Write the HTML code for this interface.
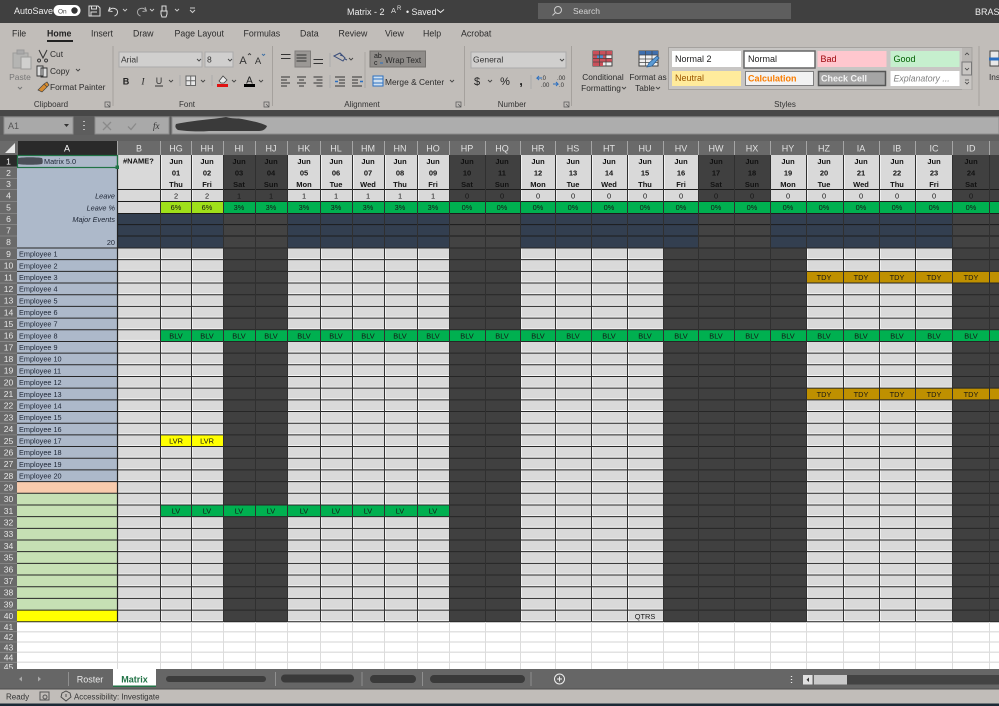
<!DOCTYPE html>
<html><head><meta charset="utf-8"><title>Matrix</title>
<style>
html,body{margin:0;padding:0;background:#404040;width:999px;height:706px;overflow:hidden}
svg{display:block;font-family:"Liberation Sans",sans-serif;filter:blur(.3px)}
.t{font-size:8.4px;fill:#2b2b2b}
.c{text-anchor:middle}
.hd{font-size:9px;fill:#e2e2e2;text-anchor:middle}
.rn{font-size:8.6px;fill:#e6e6e6;text-anchor:middle}
.d{font-size:7.5px;font-weight:bold;fill:#111;text-anchor:middle}
.v{font-size:7.4px;fill:#151515;text-anchor:middle}
.e{font-size:7.3px;fill:#1c2433}
.ch{fill:none;stroke:#444;stroke-width:.9}
</style></head><body>
<svg width="999" height="706" viewBox="0 0 999 706" xmlns="http://www.w3.org/2000/svg">
<!-- title bar -->
<rect width="999" height="23" fill="#404040"/>
<text x="14" y="14" font-size="9" fill="#eee">AutoSave</text>
<rect x="53.500" y="5" width="27" height="11" rx="5.500" fill="#fff"/>
<text x="58" y="13.500" font-size="6.500" fill="#444">On</text>
<circle cx="74.500" cy="10.500" r="3.200" fill="#333"/>
<path d="M89 6h9l2 2v8H89zM91.500 6v3h5V6M91 16v-4h6" fill="none" stroke="#ddd" stroke-width="1"/>
<path d="M110 7l-1.500 4 4 .5M109 10.500c3-4 9-2 8.500 2 -.2 2-1.500 3-3 3.500" fill="none" stroke="#ddd" stroke-width="1"/>
<path d="M123 9l2 2 2-2" class="ch" style="stroke:#ccc"/>
<path d="M145 7l1.500 4-4 .5M146 10.500c-3-4-9-2-8.500 2 .2 2 1.500 3 3 3.500" fill="none" stroke="#aaa" stroke-width="1"/>
<path d="M150 9l2 2 2-2" class="ch" style="stroke:#ccc"/>
<path d="M162 6h4v5h-4zM161 11h6v3l-1 3h-4l-1-3z" fill="none" stroke="#ddd" stroke-width="1"/>
<path d="M175 9l2 2 2-2" class="ch" style="stroke:#ccc"/>
<path d="M190 8h5M190 10l2.500 2.500L195 10" fill="none" stroke="#ccc" stroke-width="1"/>
<text x="347" y="15" font-size="9" fill="#eee">Matrix  -  2</text>
<text x="391" y="13" font-size="7.500" fill="#ddd">A</text><text x="397" y="10" font-size="6" fill="#ddd">R</text>
<text x="406" y="15" font-size="8.800" fill="#eee">• Saved</text>
<path d="M437 9.500l3.500 3 3.500-3" fill="none" stroke="#eee" stroke-width="1"/>
<rect x="538" y="3" width="253" height="16" fill="#5e5e5e"/>
<circle cx="558" cy="10" r="3.500" fill="none" stroke="#ccc"/><path d="M555.500 12.500l-3 3" stroke="#ccc"/>
<text x="573" y="14" font-size="8.500" fill="#d5d5d5">Search</text>
<text x="975" y="15" font-size="9" fill="#eee">BRASH</text>

<!-- ribbon -->
<rect y="23" width="999" height="87" fill="#c1bdb9"/>
<g class="t" style="font-size:8.800px">
<text x="12" y="36.500">File</text>
<text x="47" y="36.500" font-weight="bold" fill="#222">Home</text>
<text x="91" y="36.500">Insert</text>
<text x="133" y="36.500">Draw</text>
<text x="174.500" y="36.500">Page Layout</text>
<text x="243.500" y="36.500">Formulas</text>
<text x="300" y="36.500">Data</text>
<text x="338.500" y="36.500">Review</text>
<text x="385" y="36.500">View</text>
<text x="423" y="36.500">Help</text>
<text x="461" y="36.500">Acrobat</text>
</g>
<rect x="47" y="40" width="26" height="2" fill="#222"/>
<path d="M113 46v60M272.500 46v60M464.500 46v60M571.500 46v60M979 46v60" stroke="#a5a19d" stroke-width="1"/>

<!-- clipboard -->
<path d="M13 53h15v15H13z" fill="#b5b5b3" stroke="#9d9d9b"/>
<rect x="17" y="50" width="7" height="4" fill="#aaa" stroke="#999"/>
<rect x="21" y="57" width="10" height="12" fill="#d0d0ce" stroke="#9d9d9b"/>
<text x="20" y="80" font-size="8.500" fill="#777" class="c">Paste</text>
<path d="M18 87l2 2 2-2" fill="none" stroke="#777"/>
<path d="M39 50l4 8 4-8M39 59a1.500 1.500 0 1 0 .1 0M46 59a1.500 1.500 0 1 0 .1 0" fill="none" stroke="#333" stroke-width="1"/>
<text x="50" y="57" class="t">Cut</text>
<path d="M37 66h6l0 10h-6zM41 68h6v9h-6z" fill="#ddd" stroke="#333" stroke-width=".9"/>
<text x="50" y="74" class="t">Copy</text>
<path d="M76 69l2 2 2-2" class="ch"/>
<path d="M38 90l6-6 3 3-5 5zM44 84l3-2 2 3-2 2" fill="#d88b2e" stroke="#444" stroke-width=".7"/>
<text x="50" y="90" class="t">Format Painter</text>
<text x="51" y="107" font-size="8" fill="#333" class="c">Clipboard</text>
<path d="M105 102h5v5h-5zM107 104l3 3" fill="none" stroke="#555" stroke-width=".7"/>

<!-- font group -->
<rect x="119" y="52" width="83" height="15" fill="#d0cfce" stroke="#aaa"/>
<text x="121" y="62.500" font-size="8.500" fill="#333">Arial</text>
<path d="M197 59l2 2 2-2" class="ch"/>
<rect x="205" y="52" width="28" height="15" fill="#d0cfce" stroke="#aaa"/>
<text x="207" y="62.500" font-size="8.500" fill="#333">8</text>
<path d="M228 59l2 2 2-2" class="ch"/>
<text x="243" y="64" font-size="11" fill="#333" class="c">A</text><path d="M248 55l1.500-1.500 1.500 1.500" class="ch"/>
<text x="258" y="64" font-size="9.500" fill="#333" class="c">A</text><path d="M262 54l1.500 1.500 1.500-1.500" class="ch" style="stroke:#3a6ea5"/>
<text x="126" y="84.500" font-size="9" font-weight="bold" fill="#222" class="c">B</text>
<text x="143" y="84.500" font-size="9" font-style="italic" fill="#222" class="c" font-family="Liberation Serif">I</text>
<text x="159" y="84" font-size="9" fill="#333" class="c">U</text><path d="M155 86h8" stroke="#333"/>
<path d="M169 80l2 2 2-2" class="ch"/>
<rect x="186" y="76" width="9.500" height="9.500" fill="#e8e8e8" stroke="#666"/><path d="M190.700 76v9.500M186 80.700h9.500" stroke="#666"/>
<path d="M201 80l2 2 2-2" class="ch"/>
<path d="M180 75v11M212 75v11" stroke="#aaa"/>
<path d="M219 81l4-5 4 4-3 3h-3z" fill="#e8e8e8" stroke="#444" stroke-width=".8"/>
<rect x="217" y="84" width="11" height="3" fill="#e01212"/>
<path d="M232 80l2 2 2-2" class="ch"/>
<text x="249.500" y="83.500" font-size="10" fill="#222" class="c">A</text>
<rect x="244" y="84" width="11" height="3" fill="#000"/>
<path d="M259 80l2 2 2-2" class="ch"/>
<text x="187" y="107" font-size="8" fill="#333" class="c">Font</text>
<path d="M264 102h5v5h-5zM266 104l3 3" fill="none" stroke="#555" stroke-width=".7"/>

<!-- alignment -->
<rect x="295" y="51" width="15.500" height="16" fill="#9b9895" stroke="#807d7a"/>
<path d="M281 54.500h9.500M281 58.500h9.500M296.500 55h10M296.500 58h10M296.500 61h10M313.500 59.500h9.500M313.500 63.500h9.500" stroke="#333" stroke-width="1"/>
<path d="M334 56l6-3 5 5-2 3zM340 55l3 1M345 59l2 1" fill="none" stroke="#3a4d7a" stroke-width="1"/>
<path d="M349 58l2 2 2-2" class="ch"/>
<path d="M330 53v14M330 75v13" stroke="#aaa"/>
<path d="M281 77h9M281 80h6M281 83h9M281 86h6M297 77h9M299 80h5M297 83h9M299 86h5M313.500 77h9M316.500 80h6M313.500 83h9M316.500 86h6M335 77h10M335 86h10M339 80h6M339 83h6M352 77h10M352 86h10M352 80h6M352 83h6" stroke="#333" stroke-width="1"/>
<path d="M338 81.500l-3 0M360 81.500l3 0" stroke="#2b6fc0" stroke-width="1.500"/>
<path d="M365 52v36" stroke="#a9a5a1"/>
<rect x="370" y="51" width="55.500" height="16" fill="#8f8c89" stroke="#75726f"/>
<text x="374" y="58" font-size="7" fill="#222">ab</text><text x="374" y="65" font-size="7" fill="#222">c</text>
<path d="M380 63h3" stroke="#2b6fc0"/>
<text x="385" y="63" class="t" style="font-size:8.100px">Wrap Text</text>
<rect x="373" y="76" width="10" height="10" fill="#cfe0f0" stroke="#2b6fc0" stroke-width="1"/><path d="M373 79h10M373 83h10" stroke="#2b6fc0"/>
<text x="385" y="85" class="t">Merge &amp; Center</text>
<path d="M450 80l2 2 2-2" class="ch"/>
<text x="362" y="107" font-size="8" fill="#333" class="c">Alignment</text>
<path d="M456 102h5v5h-5zM458 104l3 3" fill="none" stroke="#555" stroke-width=".7"/>

<!-- number -->
<rect x="471" y="52" width="95" height="16" fill="#d0cfce" stroke="#aaa"/>
<text x="473" y="62.500" font-size="8.500" fill="#333">General</text>
<path d="M560 59l2 2 2-2" class="ch"/>
<text x="477" y="85" font-size="11" fill="#222" class="c">$</text>
<path d="M488 80l2 2 2-2" class="ch"/>
<text x="505" y="85" font-size="11" fill="#222" class="c">%</text>
<text x="521" y="85" font-size="13" font-weight="bold" fill="#222" class="c">,</text>
<path d="M531 75v14" stroke="#aaa"/>
<text x="541" y="80" font-size="6" fill="#333">.0</text><text x="541" y="87" font-size="6" fill="#333">.00</text>
<path d="M542 78h-5l2-2M537 78l2 2" fill="none" stroke="#2b6fc0"/>
<text x="557" y="80" font-size="6" fill="#333">.00</text><text x="559" y="87" font-size="6" fill="#333">.0</text>
<path d="M553 84h5l-2-2M558 84l-2 2" fill="none" stroke="#2b6fc0"/>
<text x="512" y="107" font-size="8" fill="#333" class="c">Number</text>
<path d="M564 102h5v5h-5zM566 104l3 3" fill="none" stroke="#555" stroke-width=".7"/>

<!-- cond format -->
<rect x="593" y="51" width="19" height="15" fill="#eee" stroke="#444"/>
<path d="M593 51h19v4h-6v3h6v4h-9v4h-10z" fill="#c9505a"/>
<path d="M597 55h6v3h-6z" fill="#4f8fd0"/>
<path d="M599.500 51v15M606 51v15M593 55h19M593 58.500h19M593 62h19" stroke="#444" stroke-width=".7"/>
<text x="603" y="80" class="c" font-size="8.300" fill="#2b2b2b">Conditional</text>
<text x="601" y="91" class="c" font-size="8.300" fill="#2b2b2b">Formatting</text>
<path d="M622 87l2 2 2-2" class="ch"/>
<rect x="639" y="51" width="19" height="15" fill="#f0f0f0" stroke="#444"/>
<rect x="639" y="51" width="19" height="4" fill="#3f6fae"/>
<path d="M645.500 51v15M652 51v15M639 55h19M639 59h19M639 62.500h19" stroke="#444" stroke-width=".7"/>
<path d="M647 67l2-4 8-7 2 2-7 8z" fill="#5b9bd5" stroke="#2b5f95" stroke-width=".8"/>
<text x="648" y="80" class="c" font-size="8.300" fill="#2b2b2b">Format as</text>
<text x="645" y="91" class="c" font-size="8.300" fill="#2b2b2b">Table</text>
<path d="M656 87l2 2 2-2" class="ch"/>

<!-- styles -->
<rect x="668.500" y="47.500" width="303.500" height="42" fill="#c8c6c4" stroke="#a5a29f"/>
<rect x="672" y="51" width="69" height="16" fill="#fff"/>
<text x="675" y="62" font-size="9" fill="#222">Normal 2</text>
<rect x="744" y="51" width="71" height="17" fill="#fff" stroke="#666" stroke-width="1.500"/>
<text x="748" y="62" font-size="9" fill="#222">Normal</text>
<rect x="817.500" y="51" width="69" height="16" fill="#ffc7ce"/>
<text x="820.500" y="62" font-size="9" fill="#9c0006">Bad</text>
<rect x="890.500" y="51" width="69" height="16" fill="#c6efce"/>
<text x="893.500" y="62" font-size="9" fill="#006100">Good</text>
<rect x="672" y="71" width="69" height="15" fill="#ffeb9c"/>
<text x="675" y="81" font-size="9" fill="#9c5700">Neutral</text>
<rect x="745.500" y="71.500" width="68" height="14" fill="#f2f2f2" stroke="#7f7f7f"/>
<text x="748" y="81.500" font-size="9" font-weight="bold" fill="#fa7d00">Calculation</text>
<rect x="818.500" y="71.500" width="67" height="14" fill="#a5a5a5" stroke="#555" stroke-width="1.500"/>
<text x="821" y="81.500" font-size="9" font-weight="bold" fill="#f4f4f4">Check Cell</text>
<rect x="890.500" y="71" width="69" height="15" fill="#fff"/>
<text x="893.500" y="81.500" font-size="8.800" font-style="italic" fill="#7f7f7f">Explanatory ...</text>
<rect x="962" y="48" width="9.500" height="14" fill="#b9b6b3"/><rect x="962" y="62" width="9.500" height="13" fill="#c9c6c3" stroke="#777"/><rect x="962" y="75.500" width="9.500" height="14" fill="#c9c6c3"/>
<path d="M965 55l2-2 2 2M965 68l2 2 2-2M965 80h4M965 82l2 2 2-2" fill="none" stroke="#444" stroke-width=".8"/>
<text x="785" y="107" font-size="8" fill="#333" class="c">Styles</text>
<rect x="990" y="51" width="9" height="15" fill="#e8e8e8" stroke="#444"/><path d="M989 59h10" stroke="#2b6fc0" stroke-width="3"/>
<text x="989" y="80" font-size="8.300" fill="#2b2b2b">Ins</text>

<!-- formula bar -->
<rect y="110" width="999" height="6" fill="#474747"/>
<rect y="116" width="999" height="25" fill="#5d5d5d"/>
<rect x="4" y="117" width="69" height="17" fill="#a9a9a9" stroke="#8d8d8d"/>
<text x="8" y="129" font-size="9" fill="#555">A1</text>
<path d="M64 124h5l-2.500 3z" fill="#333"/>
<path d="M84 121v1M84 125v1M84 129v1" stroke="#ddd" stroke-width="1.500"/>
<rect x="95" y="117" width="74" height="17" fill="#a9a9a9" stroke="#8d8d8d"/>
<path d="M103 122l8 8M111 122l-8 8M128 126.500l3 3 5-6" fill="none" stroke="#8a8a8a" stroke-width="1.300"/>
<text x="153" y="129" font-size="9" font-style="italic" font-family="Liberation Serif" fill="#333">fx</text>
<rect x="172" y="117" width="827" height="17" fill="#adadad" stroke="#8d8d8d"/>
<path d="M176 124c20-4 40-5 50-7 6 2 12 1 16 2 10 2 20 4 25 7 -1 3-4 5-8 5h-50c-12 1-24 0-31-1 -3-2-3-4-2-6z" fill="#3a3a3a"/>

<!-- column header band -->
<rect y="135" width="999" height="20" fill="#606060"/>
<rect y="141" width="999" height="14" fill="#6a6a6a"/>
<path d="M15 143v10H5z" fill="#e8e8e8"/>
<rect x="18" y="141" width="99" height="14" fill="#2a2a2a"/>
<path d="M117.500 141v14M160.500 141v14M191.500 141v14M223.500 141v14M255.500 141v14M287.500 141v14M320.500 141v14M352.500 141v14M384.500 141v14M417.500 141v14M449.500 141v14M485.500 141v14M520.500 141v14M555.500 141v14M591.500 141v14M627.500 141v14M663.500 141v14M698.500 141v14M734.500 141v14M770.500 141v14M806.500 141v14M843.500 141v14M879.500 141v14M915.500 141v14M952.500 141v14M989.500 141v14" stroke="#a5a5a5" stroke-width="1"/>
<text x="67" y="151.500" class="hd" style="fill:#fff">A</text>
<g class="hd">
<text x="139" y="151.500">B</text><text x="176" y="151.500">HG</text><text x="207" y="151.500">HH</text><text x="239" y="151.500">HI</text><text x="271" y="151.500">HJ</text><text x="304" y="151.500">HK</text><text x="336" y="151.500">HL</text><text x="368" y="151.500">HM</text><text x="400" y="151.500">HN</text><text x="433" y="151.500">HO</text><text x="467" y="151.500">HP</text><text x="502" y="151.500">HQ</text><text x="538" y="151.500">HR</text><text x="573" y="151.500">HS</text><text x="609" y="151.500">HT</text><text x="645" y="151.500">HU</text><text x="681" y="151.500">HV</text><text x="716" y="151.500">HW</text><text x="752" y="151.500">HX</text><text x="788" y="151.500">HY</text><text x="824" y="151.500">HZ</text><text x="861" y="151.500">IA</text><text x="897" y="151.500">IB</text><text x="934" y="151.500">IC</text><text x="971" y="151.500">ID</text>
</g>

<!-- row header column -->
<rect x="0" y="155" width="17" height="514" fill="#6a6a6a"/>
<rect x="0" y="155" width="17" height="12" fill="#2a2a2a"/>

<!-- sheet -->
<rect x="17" y="155" width="982" height="514" fill="#fff"/>
<!-- column A -->
<rect x="17" y="155" width="100" height="326.600" fill="#adb9ca"/>
<rect x="17" y="481.600" width="100" height="11.680" fill="#f8cbad"/>
<rect x="17" y="493.280" width="100" height="116.800" fill="#c6e0b4"/>
<rect x="17" y="610.080" width="100" height="11.680" fill="#ffff00"/>
<!-- light base -->
<rect x="117" y="155" width="882" height="58" fill="#d9d9d9"/>
<rect x="117" y="248" width="882" height="373.760" fill="#d9d9d9"/>
<!-- light row highlights rows 9-40 -->
<path d="M117 258.700H999M117 270.400H999M117 282H999M117 293.700H999M117 305.400H999M117 317.100H999M117 328.800H999M117 340.400H999M117 352.100H999M117 363.800H999M117 375.500H999M117 387.200H999M117 398.800H999M117 410.500H999M117 422.200H999M117 433.900H999M117 445.600H999M117 457.200H999M117 468.900H999M117 480.600H999M117 492.300H999M117 504H999M117 515.600H999M117 527.300H999M117 539H999M117 550.700H999M117 562.400H999M117 574H999M117 585.700H999M117 597.400H999M117 609.100H999M117 620.800H999" stroke="#f4f4f4" stroke-width="1"/>
<!-- vertical light sides -->
<path d="M161.500 155V622M192.500 155V622M321.500 155V622M353.500 155V622M385.500 155V622M418.500 155V622M521.500 155V622M556.500 155V622M592.500 155V622M628.500 155V622M664.500 155V248M807.500 155V622M844.500 155V622M880.500 155V622M916.500 155V622" stroke="#f0f0f0" stroke-width="1"/>
<!-- dark areas rows 1-5 -->
<rect x="223" y="155" width="64.500" height="46" fill="#404040"/>
<rect x="449" y="155" width="71" height="46" fill="#404040"/>
<rect x="699" y="155" width="71" height="46" fill="#404040"/>
<rect x="952.500" y="155" width="46.500" height="46" fill="#404040"/>
<!-- row 5 -->
<rect x="160" y="201" width="63" height="12" fill="#9fe01a"/>
<rect x="223" y="201" width="776" height="12" fill="#00b050"/>
<!-- row 6-8 navy & grey -->
<rect x="117" y="213" width="882" height="35" fill="#333f50"/>
<rect x="223" y="213" width="64.500" height="35" fill="#434343"/>
<rect x="449" y="213" width="71" height="35" fill="#434343"/>
<rect x="699" y="213" width="71" height="35" fill="#434343"/>
<rect x="952.500" y="213" width="46.500" height="35" fill="#434343"/>
<!-- dark rows 9-40 -->
<rect x="223" y="248" width="64.500" height="373.760" fill="#404040"/>
<rect x="449" y="248" width="71" height="373.760" fill="#404040"/>
<rect x="663" y="248" width="143" height="373.760" fill="#404040"/>
<rect x="952.500" y="248" width="46.500" height="373.760" fill="#404040"/>
<!-- coloured rows -->
<rect x="806" y="271.360" width="193" height="11.680" fill="#bf9000"/>
<rect x="806" y="388.160" width="193" height="11.680" fill="#bf9000"/>
<rect x="160" y="329.760" width="839" height="11.680" fill="#00b050"/>
<rect x="160" y="434.880" width="63" height="11.680" fill="#ffff00"/>
<rect x="160" y="504.960" width="289" height="11.680" fill="#00b050"/>
<!-- grid lines -->
<path d="M17 248H999M17 259.680H999M17 271.360H999M17 283.040H999M17 294.720H999M17 306.400H999M17 318.080H999M17 329.760H999M17 341.440H999M17 353.120H999M17 364.800H999M17 376.480H999M17 388.160H999M17 399.840H999M17 411.520H999M17 423.200H999M17 434.880H999M17 446.560H999M17 458.240H999M17 469.920H999M17 481.600H999M17 493.280H999M17 504.960H999M17 516.640H999M17 528.320H999M17 540H999M17 551.680H999M17 563.360H999M17 575.040H999M17 586.720H999M17 598.400H999M17 610.080H999M17 621.760H999" stroke="#262626" stroke-width="1"/>
<path d="M117 189.500H999M117 201.500H999M117 213.500H999M117 224.600H999M117 236H999" stroke="#1c1c1c" stroke-width="1"/>
<path d="M117.500 155V622" stroke="#222" stroke-width="1.200"/>
<path d="M160.500 155V622M191.500 155V622M223.500 155V622M255.500 155V622M287.500 155V622M320.500 155V622M352.500 155V622M384.500 155V622M417.500 155V622M449.500 155V622M485.500 155V622M520.500 155V622M555.500 155V622M591.500 155V622M627.500 155V622M663.500 155V622M698.500 155V622M734.500 155V622M770.500 155V622M806.500 155V622M843.500 155V622M879.500 155V622M915.500 155V622M952.500 155V622M989.500 155V622" stroke="#303030" stroke-width="1"/>
<!-- empty rows grid -->
<path d="M17 631.700H999M17 642H999M17 652.300H999M17 662.300H999" stroke="#e2e2e2" stroke-width="1.500"/>
<path d="M117.500 622V669M160.500 622V669M191.500 622V669M223.500 622V669M255.500 622V669M287.500 622V669M320.500 622V669M352.500 622V669M384.500 622V669M417.500 622V669M449.500 622V669M485.500 622V669M520.500 622V669M555.500 622V669M591.500 622V669M627.500 622V669M663.500 622V669M698.500 622V669M734.500 622V669M770.500 622V669M806.500 622V669M843.500 622V669M879.500 622V669M915.500 622V669M952.500 622V669M989.500 622V669" stroke="#dcdcdc" stroke-width="1"/>
<!-- row header separators -->
<path d="M0 167H17M0 178.500H17M0 189.500H17M0 201.500H17M0 213.500H17M0 224.600H17M0 236H17M0 248H17M0 259.680H17M0 271.360H17M0 283.040H17M0 294.720H17M0 306.400H17M0 318.080H17M0 329.760H17M0 341.440H17M0 353.120H17M0 364.800H17M0 376.480H17M0 388.160H17M0 399.840H17M0 411.520H17M0 423.200H17M0 434.880H17M0 446.560H17M0 458.240H17M0 469.920H17M0 481.600H17M0 493.280H17M0 504.960H17M0 516.640H17M0 528.320H17M0 540H17M0 551.680H17M0 563.360H17M0 575.040H17M0 586.720H17M0 598.400H17M0 610.080H17M0 621.760H17M0 631.700H17M0 642H17M0 652.300H17M0 662.300H17" stroke="#8c8c8c" stroke-width=".8"/>
<g class="rn">
<text x="8.500" y="164.500" style="fill:#fff">1</text><text x="8.500" y="176">2</text><text x="8.500" y="187">3</text><text x="8.500" y="198.500">4</text><text x="8.500" y="210.500">5</text><text x="8.500" y="222">6</text><text x="8.500" y="233.500">7</text><text x="8.500" y="245">8</text>
<text x="8.500" y="257">9</text><text x="8.500" y="268.600">10</text><text x="8.500" y="280.300">11</text><text x="8.500" y="292">12</text><text x="8.500" y="303.600">13</text><text x="8.500" y="315.300">14</text><text x="8.500" y="327">15</text><text x="8.500" y="338.700">16</text><text x="8.500" y="350.300">17</text><text x="8.500" y="362">18</text><text x="8.500" y="373.700">19</text><text x="8.500" y="385.400">20</text><text x="8.500" y="397.100">21</text><text x="8.500" y="408.700">22</text><text x="8.500" y="420.400">23</text><text x="8.500" y="432.100">24</text><text x="8.500" y="443.800">25</text><text x="8.500" y="455.500">26</text><text x="8.500" y="467.100">27</text><text x="8.500" y="478.800">28</text><text x="8.500" y="490.500">29</text><text x="8.500" y="502.200">30</text><text x="8.500" y="513.900">31</text><text x="8.500" y="525.500">32</text><text x="8.500" y="537.200">33</text><text x="8.500" y="548.900">34</text><text x="8.500" y="560.600">35</text><text x="8.500" y="572.300">36</text><text x="8.500" y="583.900">37</text><text x="8.500" y="595.600">38</text><text x="8.500" y="607.300">39</text><text x="8.500" y="619">40</text>
<text x="8.500" y="630">41</text><text x="8.500" y="640">42</text><text x="8.500" y="650.300">43</text><text x="8.500" y="660.500">44</text><text x="8.500" y="670">45</text>
</g>

<!-- column A text -->
<path d="M18 158c6-1 18-1 24 0 1 2 1 5 0 6 -6 1-18 1-24 0z" fill="#4b4f58"/>
<text x="44" y="164" class="e">Matrix 5.0</text>
<g class="e" font-style="italic" text-anchor="end">
<text x="115" y="198.500">Leave</text><text x="115" y="210.500">Leave %</text><text x="115" y="222">Major Events</text>
</g>
<text x="115" y="245" class="e" text-anchor="end">20</text>
<g class="e">
<text x="19" y="256.600">Employee 1</text><text x="19" y="268.300">Employee 2</text><text x="19" y="280">Employee 3</text><text x="19" y="291.600">Employee 4</text><text x="19" y="303.300">Employee 5</text><text x="19" y="315">Employee 6</text><text x="19" y="326.700">Employee 7</text><text x="19" y="338.400">Employee 8</text><text x="19" y="350">Employee 9</text><text x="19" y="361.700">Employee 10</text><text x="19" y="373.400">Employee 11</text><text x="19" y="385.100">Employee 12</text><text x="19" y="396.800">Employee 13</text><text x="19" y="408.400">Employee 14</text><text x="19" y="420.100">Employee 15</text><text x="19" y="431.800">Employee 16</text><text x="19" y="443.500">Employee 17</text><text x="19" y="455.200">Employee 18</text><text x="19" y="466.800">Employee 19</text><text x="19" y="478.500">Employee 20</text>
</g>
<rect x="17.500" y="155.500" width="100" height="12" fill="none" stroke="#217346" stroke-width="1.200"/>
<rect x="115.500" y="165.500" width="3.500" height="3.500" fill="#217346"/>
<text x="123" y="163.500" font-size="7.500" font-weight="bold" fill="#111">#NAME?</text>

<!-- dates -->
<g class="d">
<text x="176" y="163.800">Jun</text><text x="207" y="163.800">Jun</text><text x="239" y="163.800">Jun</text><text x="271" y="163.800">Jun</text><text x="304" y="163.800">Jun</text><text x="336" y="163.800">Jun</text><text x="368" y="163.800">Jun</text><text x="400" y="163.800">Jun</text><text x="433" y="163.800">Jun</text><text x="467" y="163.800">Jun</text><text x="502" y="163.800">Jun</text><text x="538" y="163.800">Jun</text><text x="573" y="163.800">Jun</text><text x="609" y="163.800">Jun</text><text x="645" y="163.800">Jun</text><text x="681" y="163.800">Jun</text><text x="716" y="163.800">Jun</text><text x="752" y="163.800">Jun</text><text x="788" y="163.800">Jun</text><text x="824" y="163.800">Jun</text><text x="861" y="163.800">Jun</text><text x="897" y="163.800">Jun</text><text x="934" y="163.800">Jun</text><text x="971" y="163.800">Jun</text>
<text x="176" y="175.300">01</text><text x="207" y="175.300">02</text><text x="239" y="175.300">03</text><text x="271" y="175.300">04</text><text x="304" y="175.300">05</text><text x="336" y="175.300">06</text><text x="368" y="175.300">07</text><text x="400" y="175.300">08</text><text x="433" y="175.300">09</text><text x="467" y="175.300">10</text><text x="502" y="175.300">11</text><text x="538" y="175.300">12</text><text x="573" y="175.300">13</text><text x="609" y="175.300">14</text><text x="645" y="175.300">15</text><text x="681" y="175.300">16</text><text x="716" y="175.300">17</text><text x="752" y="175.300">18</text><text x="788" y="175.300">19</text><text x="824" y="175.300">20</text><text x="861" y="175.300">21</text><text x="897" y="175.300">22</text><text x="934" y="175.300">23</text><text x="971" y="175.300">24</text>
<text x="176" y="187">Thu</text><text x="207" y="187">Fri</text><text x="239" y="187">Sat</text><text x="271" y="187">Sun</text><text x="304" y="187">Mon</text><text x="336" y="187">Tue</text><text x="368" y="187">Wed</text><text x="400" y="187">Thu</text><text x="433" y="187">Fri</text><text x="467" y="187">Sat</text><text x="502" y="187">Sun</text><text x="538" y="187">Mon</text><text x="573" y="187">Tue</text><text x="609" y="187">Wed</text><text x="645" y="187">Thu</text><text x="681" y="187">Fri</text><text x="716" y="187">Sat</text><text x="752" y="187">Sun</text><text x="788" y="187">Mon</text><text x="824" y="187">Tue</text><text x="861" y="187">Wed</text><text x="897" y="187">Thu</text><text x="934" y="187">Fri</text><text x="971" y="187">Sat</text>
</g>
<!-- row 4/5 -->
<g class="v">
<text x="176" y="198.500">2</text><text x="207" y="198.500">2</text><text x="239" y="198.500">1</text><text x="271" y="198.500">1</text><text x="304" y="198.500">1</text><text x="336" y="198.500">1</text><text x="368" y="198.500">1</text><text x="400" y="198.500">1</text><text x="433" y="198.500">1</text><text x="467" y="198.500">0</text><text x="502" y="198.500">0</text><text x="538" y="198.500">0</text><text x="573" y="198.500">0</text><text x="609" y="198.500">0</text><text x="645" y="198.500">0</text><text x="681" y="198.500">0</text><text x="716" y="198.500">0</text><text x="752" y="198.500">0</text><text x="788" y="198.500">0</text><text x="824" y="198.500">0</text><text x="861" y="198.500">0</text><text x="897" y="198.500">0</text><text x="934" y="198.500">0</text><text x="971" y="198.500">0</text>
<text x="176" y="210">6%</text><text x="207" y="210">6%</text><text x="239" y="210">3%</text><text x="271" y="210">3%</text><text x="304" y="210">3%</text><text x="336" y="210">3%</text><text x="368" y="210">3%</text><text x="400" y="210">3%</text><text x="433" y="210">3%</text><text x="467" y="210">0%</text><text x="502" y="210">0%</text><text x="538" y="210">0%</text><text x="573" y="210">0%</text><text x="609" y="210">0%</text><text x="645" y="210">0%</text><text x="681" y="210">0%</text><text x="716" y="210">0%</text><text x="752" y="210">0%</text><text x="788" y="210">0%</text><text x="824" y="210">0%</text><text x="861" y="210">0%</text><text x="897" y="210">0%</text><text x="934" y="210">0%</text><text x="971" y="210">0%</text>
<!-- TDY -->
<text x="824" y="280">TDY</text><text x="861" y="280">TDY</text><text x="897" y="280">TDY</text><text x="934" y="280">TDY</text><text x="971" y="280">TDY</text>
<text x="824" y="396.800">TDY</text><text x="861" y="396.800">TDY</text><text x="897" y="396.800">TDY</text><text x="934" y="396.800">TDY</text><text x="971" y="396.800">TDY</text>
<!-- BLV -->
<text x="176" y="338.400">BLV</text><text x="207" y="338.400">BLV</text><text x="239" y="338.400">BLV</text><text x="271" y="338.400">BLV</text><text x="304" y="338.400">BLV</text><text x="336" y="338.400">BLV</text><text x="368" y="338.400">BLV</text><text x="400" y="338.400">BLV</text><text x="433" y="338.400">BLV</text><text x="467" y="338.400">BLV</text><text x="502" y="338.400">BLV</text><text x="538" y="338.400">BLV</text><text x="573" y="338.400">BLV</text><text x="609" y="338.400">BLV</text><text x="645" y="338.400">BLV</text><text x="681" y="338.400">BLV</text><text x="716" y="338.400">BLV</text><text x="752" y="338.400">BLV</text><text x="788" y="338.400">BLV</text><text x="824" y="338.400">BLV</text><text x="861" y="338.400">BLV</text><text x="897" y="338.400">BLV</text><text x="934" y="338.400">BLV</text><text x="971" y="338.400">BLV</text>
<!-- LVR / LV / QTRS -->
<text x="176" y="443.500">LVR</text><text x="207" y="443.500">LVR</text>
<text x="176" y="513.600">LV</text><text x="207" y="513.600">LV</text><text x="239" y="513.600">LV</text><text x="271" y="513.600">LV</text><text x="304" y="513.600">LV</text><text x="336" y="513.600">LV</text><text x="368" y="513.600">LV</text><text x="400" y="513.600">LV</text><text x="433" y="513.600">LV</text>
<text x="645" y="619">QTRS</text>
</g>

<!-- sheet tabs -->
<rect y="669" width="999" height="19.500" fill="#666"/>
<path d="M22 676.500l-3 2.500 3 2.500zM38 676.500l3 2.500-3 2.500z" fill="#a8a8a8"/>
<path d="M68.500 672v14M275.500 672v14M362 672v14M422.500 672v14M531 672v14" stroke="#8f8f8f" stroke-width="1"/>
<text x="90" y="682.500" font-size="9" fill="#eaeaea" class="c">Roster</text>
<rect x="113" y="669" width="43" height="17" fill="#fff"/>
<rect x="113" y="685.500" width="43" height="1.500" fill="#217346"/>
<text x="134.500" y="682.500" font-size="9" font-weight="bold" fill="#217346" class="c">Matrix</text>
<rect x="166" y="676" width="100" height="6" rx="3" fill="#3d3d3d"/>
<rect x="281" y="674.500" width="73" height="8" rx="4" fill="#3a3a3a"/>
<rect x="370" y="675" width="46" height="8" rx="4" fill="#3a3a3a"/>
<rect x="430" y="675" width="95" height="8" rx="4" fill="#3a3a3a"/>
<circle cx="559.500" cy="679" r="5" fill="none" stroke="#eee" stroke-width="1"/><path d="M557 679h5M559.500 676.500v5" stroke="#eee" stroke-width="1"/>
<path d="M791.500 676v1M791.500 679v1M791.500 682v1" stroke="#eee" stroke-width="1.300"/>
<rect x="803" y="675" width="9.500" height="9.500" fill="#e0e0e0"/><path d="M809 677.500v4.500l-2.500-2.200z" fill="#333"/>
<rect x="814" y="675" width="33" height="9.500" fill="#c9c9c9"/>
<rect x="847" y="675" width="152" height="9.500" fill="#434343"/>

<!-- status bar -->
<rect y="688.500" width="999" height="1" fill="#4d4d4d"/>
<rect y="689.500" width="999" height="14" fill="#c1bdb9"/>
<text x="6" y="699.500" font-size="8" fill="#333">Ready</text>
<rect x="40" y="692" width="9" height="8" fill="none" stroke="#555"/><circle cx="45" cy="697" r="2" fill="none" stroke="#555"/>
<path d="M62 693l4-2 4 2 1 4-5 4-5-4zM66 694v3" fill="none" stroke="#444" stroke-width=".9"/>
<text x="74" y="699.500" font-size="7.900" fill="#333">Accessibility: Investigate</text>
<rect y="703.500" width="999" height="2.500" fill="#1c2a36"/>
</svg>
</body></html>
